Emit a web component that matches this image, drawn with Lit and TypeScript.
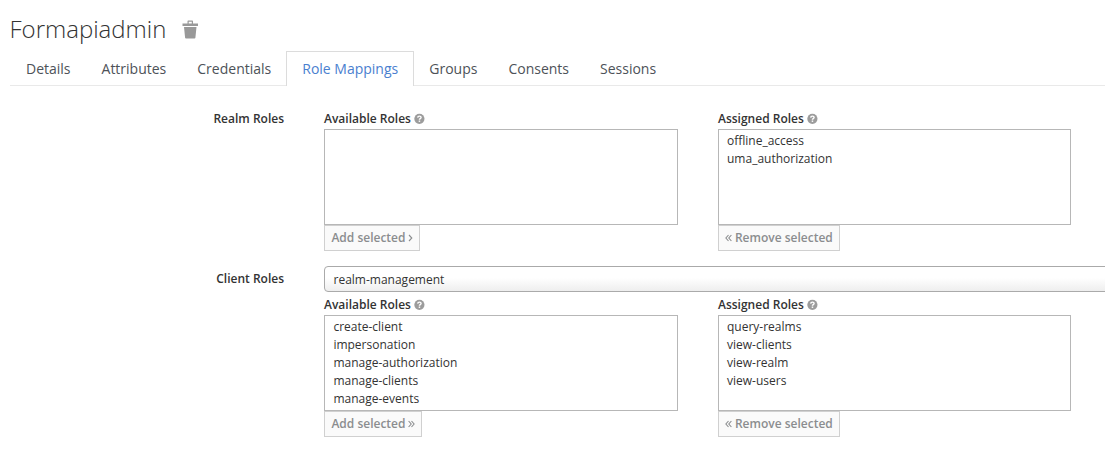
import { LitElement, html, css, svg } from "lit";
import { customElement, property } from "lit/decorators.js";

const chevrons: Record<string, { width: number; path: string }> = {
  right: { width: 5, path: "M1 1 3.8 4 1 7" },
  doubleRight: { width: 7, path: "M.6 1 3.2 4 .6 7M3.5 1 6.1 4 3.5 7" },
  doubleLeft: { width: 7, path: "M3.5 1 .9 4l2.6 3M6.4 1 3.8 4l2.6 3" },
};

const chevron = (name: string) => {
  const { width, path } = chevrons[name];
  return html`<svg width=${width} height="8" viewBox="0 0 ${width} 8">
    ${svg`<path d=${path} fill="none" stroke="#8b8d8f" stroke-width="1.1"/>`}
  </svg>`;
};

@customElement("role-list")
export class RoleList extends LitElement {
  @property() heading = "";
  @property({ attribute: false }) roles: string[] = [];
  @property() action = "";
  @property() before = "";
  @property() after = "";

  static styles = css`
    :host {
      display: block;
    }
    .heading {
      display: flex;
      align-items: center;
      height: 20px;
      gap: 3.5px;
      font-weight: 600;
      white-space: nowrap;
    }
    .list {
      box-sizing: border-box;
      height: 96px;
      margin: 0;
      padding: 2px 8.4px;
      border: 1px solid #b7b7b7;
      list-style: none;
      line-height: 18px;
      overflow: hidden;
    }
    .list.assigned {
      padding-left: 8px;
    }
    .action {
      box-sizing: border-box;
      display: flex;
      align-items: center;
      gap: 2.5px;
      width: max-content;
      height: 26px;
      margin: 0;
      padding: 0 6px 0 6.4px;
      border: 1px solid #d0d0d0;
      background: #fafafa;
      color: #8b8d8f;
      font: 600 12px/18px "Open Sans", sans-serif;
    }
    svg {
      display: block;
      flex: none;
    }
  `;

  render() {
    return html`
      <div class="heading">
        <span>${this.heading}</span>
        <svg width="11" height="12" viewBox="0 0 11 12">
          <circle cx="5.4" cy="5.8" r="5.1" fill="#9c9c9c" />
          <path d="M3.7 4.6C3.8 2.6 7.1 2.7 7.1 4.5 7.1 5.6 5.4 5.5 5.4 6.8" fill="none" stroke="#fff" stroke-width="1.4" />
          <path d="M4.7 7.5h1.5v1.4H4.7z" fill="#fff" />
        </svg>
      </div>
      <ul class="list ${this.before ? "assigned" : ""}">
        ${this.roles.map((role) => html`<li>${role}</li>`)}
      </ul>
      <button class="action" disabled>
        ${this.before ? chevron(this.before) : null}<span>${this.action}</span>${this.after ? chevron(this.after) : null}
      </button>
    `;
  }
}

@customElement("app-root")
export class AppRoot extends LitElement {
  static styles = css`
    :host {
      display: block;
      height: 460px;
      overflow: hidden;
      background: #fff;
      color: #333;
      font: 12px/20px "Open Sans", sans-serif;
    }
    .title {
      display: flex;
      align-items: center;
      gap: 16px;
      height: 51px;
      box-sizing: border-box;
      padding: 6px 0 0 9.5px;
    }
    .title svg {
      margin-top: 1px;
    }
    h1 {
      margin: 0;
      font-size: 24px;
      line-height: 30px;
      font-weight: 300;
    }
    .tabs {
      display: flex;
      box-sizing: border-box;
      height: 35px;
      margin-left: 10px;
      border-bottom: 1px solid #e9e9e9;
      font-size: 14px;
      color: #4d5258;
    }
    .tab {
      box-sizing: border-box;
      height: 35px;
      margin-right: -1px;
      padding: 7px 15px 0;
      border: 1px solid transparent;
      border-bottom: 0;
      line-height: 20px;
      white-space: nowrap;
    }
    .tab.active {
      border-color: #dcdcdc;
      background: #fff;
      color: #4a80cf;
    }
    .row {
      display: grid;
      grid-template-columns: 284px 781px;
      column-gap: 40px;
    }
    .realm {
      margin-top: 23px;
    }
    .client {
      margin-top: 15px;
    }
    .label {
      font-weight: 600;
      text-align: right;
    }
    .client .label {
      padding-top: 3px;
    }
    .lists {
      display: grid;
      grid-template-columns: 354px 353px;
      column-gap: 40px;
    }
    .select {
      box-sizing: border-box;
      width: 900px;
      height: 26px;
      margin-bottom: 3px;
      padding: 3px 8.5px;
      border: 1px solid #aaa;
      border-radius: 4px;
      background: linear-gradient(#fff 45%, #eee);
      line-height: 20px;
    }
  `;

  render() {
    const tabs = ["Details", "Attributes", "Credentials", "Role Mappings", "Groups", "Consents", "Sessions"];
    return html`
      <header class="title">
        <h1>Formapiadmin</h1>
        <svg width="17" height="19" viewBox="0 0 17 19">
          <path fill="#999" fill-rule="evenodd" d="M.5 3.5h5V1.2q0-.7.7-.7h4.1q.7 0 .7.7v2.3h5V6H.5zM6.7 1.7v1.8h3.1V1.7zM2 7h12.5l-1.1 10.7q-.1.8-.9.8H4q-.8 0-.9-.8z" />
        </svg>
      </header>
      <nav class="tabs">
        ${tabs.map((tab) => html`<div class="tab ${tab === "Role Mappings" ? "active" : ""}">${tab}</div>`)}
      </nav>
      <section class="row realm">
        <div class="label">Realm Roles</div>
        <div class="lists">
          <role-list heading="Available Roles" action="Add selected" after="right"></role-list>
          <role-list
            heading="Assigned Roles"
            action="Remove selected"
            before="doubleLeft"
            .roles=${["offline_access", "uma_authorization"]}
          ></role-list>
        </div>
      </section>
      <section class="row client">
        <div class="label">Client Roles</div>
        <div>
          <div class="select">realm-management</div>
          <div class="lists">
            <role-list
              heading="Available Roles"
              action="Add selected"
              after="doubleRight"
              .roles=${["create-client", "impersonation", "manage-authorization", "manage-clients", "manage-events"]}
            ></role-list>
            <role-list
              heading="Assigned Roles"
              action="Remove selected"
              before="doubleLeft"
              .roles=${["query-realms", "view-clients", "view-realm", "view-users"]}
            ></role-list>
          </div>
        </div>
      </section>
    `;
  }
}
